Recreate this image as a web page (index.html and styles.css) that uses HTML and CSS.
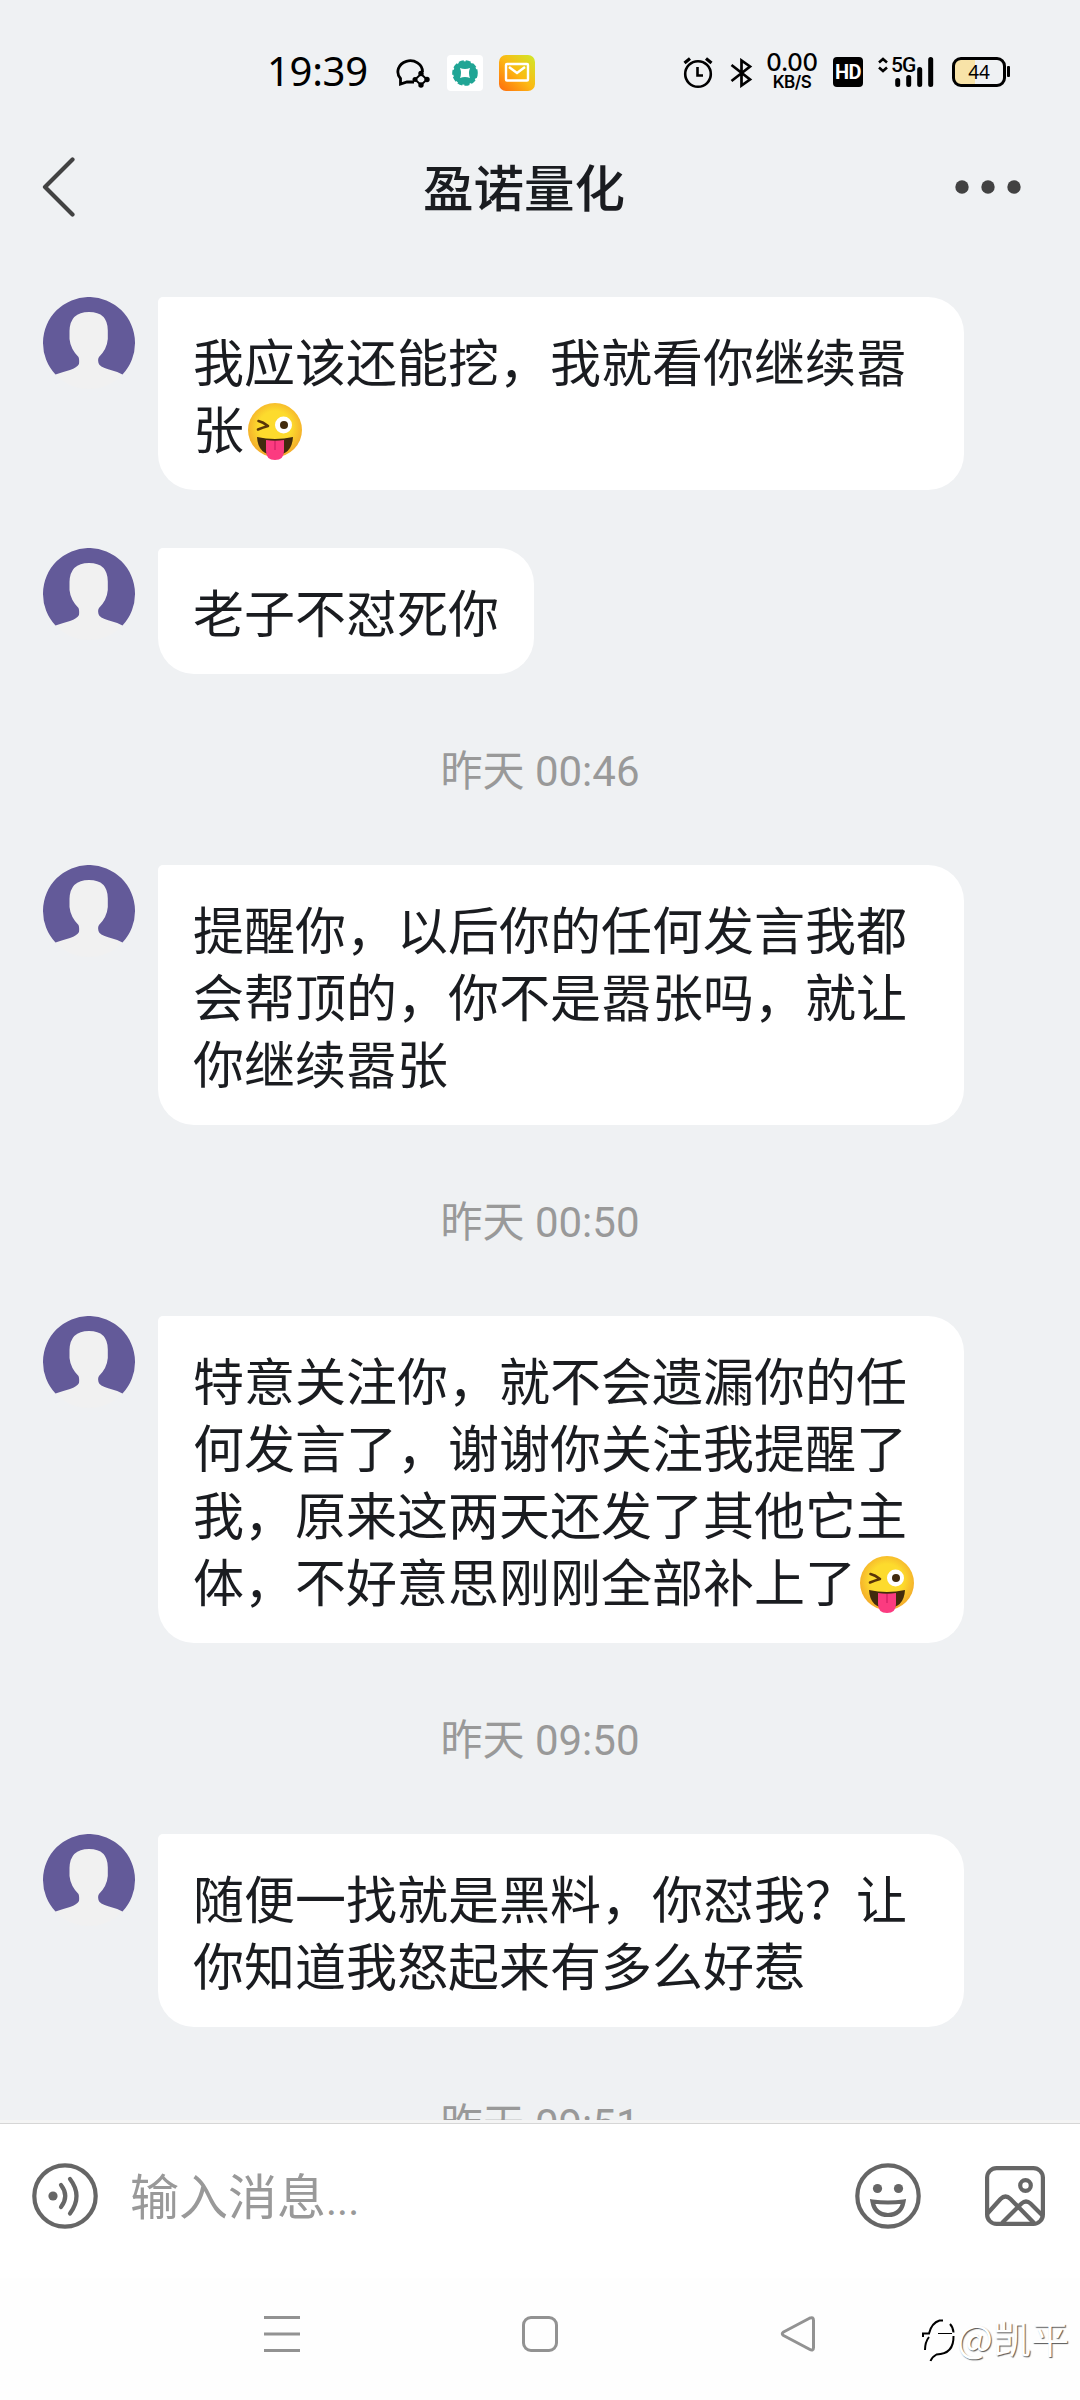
FILE: index.html
```html
<!DOCTYPE html>
<html lang="zh-CN">
<head>
<meta charset="utf-8">
<title>盈诺量化</title>
<link rel="stylesheet" href="styles.css">
</head>
<body>
<svg class="defs" aria-hidden="true">
  <symbol id="avatar" viewBox="0 0 92 92">
    <circle cx="46" cy="46" r="46" fill="#f1f1f1"/>
    <path fill="#635a99" d="M12.500 77.500A46 46 0 1 1 79.500 77.500Q74 74.500 66 72.500Q56 69.500 55.500 66Q54.500 62 56 60Q64 52 64.800 42V34Q65 15 46 15Q27 15 26.500 34V42Q27.500 52 35.500 60Q36.500 62 36 67Q34 70.500 27 73Q20 75 12.500 77.500Z"/>
  </symbol>
  <radialGradient id="face" cx=".5" cy=".45" r=".55">
    <stop offset=".55" stop-color="#fddb2d"/><stop offset="1" stop-color="#f3aa2b"/>
  </radialGradient>
  <symbol id="wink" viewBox="0 0 54 58">
    <circle cx="27" cy="27" r="27" fill="url(#face)"/>
    <circle cx="35.500" cy="22" r="8.500" fill="#fff"/>
    <circle cx="36" cy="22" r="4" fill="#422b0d"/>
    <path d="M10.500 18Q15 19 20 23Q15 24.500 10 26.500" fill="none" stroke="#5a3508" stroke-width="2.600" stroke-linecap="round" stroke-linejoin="round"/>
    <path d="M9 34Q27 38 45 34Q44 52 27 52Q10 52 9 34Z" fill="#422b0d"/>
    <path d="M18 37Q27 38.500 36 37V48Q36 57 27 57Q18 57 18 48Z" fill="#fb3b80"/>
    <path d="M27 38V47" stroke="#d9256a" stroke-width="1.500"/>
  </symbol>
</svg>

<header class="status">
  <span class="clock">19:39</span>
  <svg class="i-chat" width="35" height="30" viewBox="0 0 35 30" fill="none" stroke="#000" stroke-width="2.800">
    <path d="M19 24H12L5.500 26V20.500A12.300 11 0 1 1 27.500 14"/>
    <path d="M26 16L32 21.500L26 27L20 21.500Z" stroke-width="2"/>
    <g fill="#000" stroke="none"><circle cx="26" cy="15.500" r="2.700"/><circle cx="32" cy="21.500" r="2.700"/><circle cx="26" cy="27" r="2.700"/><circle cx="20" cy="21.500" r="2.500"/></g>
  </svg>
  <svg class="i-teal" width="36" height="36" viewBox="0 0 36 36">
    <rect width="36" height="36" rx="4" fill="#fff"/>
    <circle cx="18" cy="18" r="11.800" fill="#20a595"/>
    <circle cx="18" cy="18" r="11.800" fill="none" stroke="#20a595" stroke-width="2" stroke-dasharray="5 2"/>
    <path d="M13 13Q18 15 23 13Q21 18 23 23Q18 21 13 23Q15 18 13 13Z" fill="#fff"/>
  </svg>
  <svg class="i-mail" width="36" height="36" viewBox="0 0 36 36">
    <linearGradient id="mg" x1="0" y1="1" x2="1" y2="0"><stop offset="0" stop-color="#ff6a0c"/><stop offset=".5" stop-color="#fcb913"/><stop offset="1" stop-color="#cfe92a"/></linearGradient>
    <rect width="36" height="36" rx="7" fill="url(#mg)"/>
    <rect x="7" y="9" width="22" height="16.500" rx="1" fill="none" stroke="#fff" stroke-width="2.400"/>
    <path d="M10 12L18 18L26 12" fill="none" stroke="#fff" stroke-width="2.400"/>
  </svg>
  <svg class="i-alarm" width="30" height="32" viewBox="0 0 30 32" fill="none" stroke="#000" stroke-width="2.600">
    <circle cx="15" cy="17" r="12.800"/><path d="M14.500 10V18.500H20"/><path d="M1.500 6L7 1.500M23 1.500L28.500 6" stroke-width="3.200"/>
  </svg>
  <svg class="i-bt" width="23" height="30" viewBox="0 0 23 30" fill="none" stroke="#000" stroke-width="2.700">
    <path d="M1.500 7L20 21.500L11.500 27.500V2.500L20 8.500L1.500 23"/>
  </svg>
  <span class="speed"><b>0.00</b><i>KB/S</i></span>
  <span class="hd">HD</span>
  <svg class="i-updown" width="10" height="16" viewBox="0 0 10 16" fill="none" stroke="#000" stroke-width="2.600"><path d="M1 5.500L5 2L9 5.500M1 10.500L5 14L9 10.500"/></svg>
  <span class="signal">
    <span class="gen">5G</span>
    <svg width="40" height="30" viewBox="0 0 40 30"><path d="M2.700 23.500V27.500M13.700 20.500V27.500M24.700 12.500V27.500M35.700 2.500V27.500" stroke="#000" stroke-width="5" stroke-linecap="round"/></svg>
  </span>
  <span class="battery"><span class="level">44</span></span><span class="nub"></span>
</header>

<div class="titlebar">
  <svg width="36" height="60" viewBox="0 0 36 60"><path d="M31.500 2.500L4 30L31.500 57.500" fill="none" stroke="#424242" stroke-width="4.200" stroke-linecap="round" stroke-linejoin="round"/></svg>
  <h1>盈诺量化</h1>
  <svg class="more" width="66" height="14" viewBox="0 0 66 14" fill="#424242"><circle cx="7" cy="7" r="6.700"/><circle cx="33" cy="7" r="6.700"/><circle cx="59" cy="7" r="6.700"/></svg>
</div>

<main class="chat">
  <div class="msg"><svg class="avatar"><use href="#avatar"/></svg><p class="bubble two">我应该还能挖，我就看你继续嚣<br>张<svg class="emoji"><use href="#wink"/></svg></p></div>
  <div class="msg next"><svg class="avatar"><use href="#avatar"/></svg><p class="bubble short">老子不怼死你</p></div>
  <time>昨天 00:46</time>
  <div class="msg"><svg class="avatar"><use href="#avatar"/></svg><p class="bubble">提醒你，以后你的任何发言我都<br>会帮顶的，你不是嚣张吗，就让<br>你继续嚣张</p></div>
  <time>昨天 00:50</time>
  <div class="msg"><svg class="avatar"><use href="#avatar"/></svg><p class="bubble four">特意关注你，就不会遗漏你的任<br>何发言了，谢谢你关注我提醒了<br>我，原来这两天还发了其他它主<br>体，不好意思刚刚全部补上了<svg class="emoji"><use href="#wink"/></svg></p></div>
  <time>昨天 09:50</time>
  <div class="msg"><svg class="avatar"><use href="#avatar"/></svg><p class="bubble">随便一找就是黑料，你怼我？让<br>你知道我怒起来有多么好惹</p></div>
  <time>昨天 09:51</time>
</main>

<footer class="composer">
  <svg width="66" height="66" viewBox="0 0 66 66" fill="none" stroke="#666" stroke-width="4.200" stroke-linecap="round">
    <circle cx="33" cy="33" r="30.700"/><circle cx="21" cy="33" r="4.600" fill="#666" stroke="none"/>
    <path d="M29 22Q37.500 33 29 44M38 16Q51 33 38 50.500"/>
  </svg>
  <span class="placeholder">输入消息<span class="dots">...</span></span>
  <svg width="66" height="66" viewBox="0 0 66 66" fill="none" stroke="#666" stroke-width="4.200">
    <circle cx="33" cy="33" r="30.700"/><g fill="#666" stroke="none"><circle cx="22.500" cy="25.500" r="4.600"/><circle cx="43.500" cy="25.500" r="4.600"/></g>
    <path d="M17.500 38.500Q33 40.500 48.500 38.500Q46 52 33 52Q20 52 17.500 38.500Z"/>
  </svg>
  <svg class="photo" width="60" height="60" viewBox="0 0 60 60" fill="none" stroke="#666" stroke-width="4.200">
    <rect x="2.100" y="2.100" width="55.800" height="55.800" rx="9.500"/><circle cx="40.500" cy="19.500" r="5.300"/>
    <path d="M2 48L15.500 33Q20.500 28 25.500 33L49 57M17 57L36.500 37.500Q41 33.500 45.500 37.500L58 50"/>
  </svg>
</footer>

<nav class="keys">
  <svg width="36" height="36" viewBox="0 0 36 36" stroke="#929292" stroke-width="3"><path d="M0 1.500H36M0 18H36M0 34.500H36"/></svg>
  <svg width="36" height="36" viewBox="0 0 36 36" fill="none" stroke="#929292" stroke-width="3"><rect x="1.500" y="1.500" width="33" height="33" rx="7.500"/></svg>
  <svg width="36" height="36" viewBox="0 0 36 36" fill="none" stroke="#929292" stroke-width="3" stroke-linejoin="round"><path d="M29.500 2.200Q33.500 .5 33.500 4.500V31.500Q33.500 35.500 29.500 33.300L3.500 19.500Q1 17.700 3.500 16Z"/></svg>
  <span class="mark">
    <svg width="36" height="48" viewBox="0 0 36 48" fill="none" stroke="#000" stroke-width="2"><path d="M2 21V17.500H8Q10.500 7 18.500 4.500H22M29 8Q32 11 32.500 16.500M8 21Q4 26 4 34M32.500 20Q33 38 15.500 38.500Q11 41 9.500 45"/><path d="M17 17.500H31" stroke-width="1"/></svg>@凯平</span>
</nav>
</body>
</html>
```
FILE: styles.css
```css
* { box-sizing: border-box; }
body {
  margin: 0; width: 1080px; height: 2400px; overflow: hidden;
  display: flex; flex-direction: column;
  background: #eff1f3; color: #1a1c20;
  font-family: Roboto, "Noto Sans CJK SC", sans-serif;
}
svg { display: block; flex: none; }
.defs { width: 0; height: 0; position: absolute; }

.status { height: 145px; display: flex; align-items: center; color: #000; flex: none; padding-left: 267px; }
.clock { width: 128px; margin-top: -3px; font: 400 40px/60px "Noto Sans", sans-serif; letter-spacing: -.3px; white-space: nowrap; }
.i-chat { margin-right: 17px; }
.i-teal { margin-right: 16px; }
.i-mail { margin-right: 148px; }
.i-alarm { margin-right: 17px; }
.i-bt { margin-right: 12px; }
.speed { width: 54px; margin-top: -1px; display: flex; flex-direction: column; align-items: center; margin-right: 14px; }
.speed b { font: 500 24px/20px Inter, sans-serif; letter-spacing: -.3px; }
.speed i { font: 600 17px/18px Inter, sans-serif; letter-spacing: -.5px; }
.hd { width: 30px; height: 30px; border-radius: 4px; background: #000; color: #fff; font: 700 20px/31px Roboto, sans-serif; text-align: center; letter-spacing: -.5px; margin: -2px 15px 0 0; }
.i-updown { align-self: flex-start; margin: 57px 3px 0 0; }
.signal { width: 43px; height: 30px; display: grid; margin: -1px 18px 0 0; }
.signal > * { grid-area: 1 / 1; }
.signal svg { margin-left: 4px; }
.gen { font: 500 21px/16px Roboto, sans-serif; letter-spacing: -1px; }
.battery { width: 54px; height: 30px; border: 3px solid #000; border-radius: 9px; background: linear-gradient(90deg, #f8e3a8 20px, transparent 20px); text-align: center; margin-top: -2px; }
.level { display: block; font: 400 19px/25px "Noto Sans", sans-serif; }
.nub { width: 3px; height: 11px; background: #000; margin: -2px 0 0 1px; border-radius: 1px; }

.titlebar { height: 84px; display: flex; align-items: center; padding-left: 41px; flex: none; }
.titlebar h1 { margin: -4px 0 0 346px; width: 204px; font: 500 50.500px/70px "Noto Sans CJK SC", sans-serif; white-space: nowrap; }
.more { margin-left: 328px; }

.chat { height: 1894px; flex: none; overflow: hidden; padding-top: 68px; border-bottom: 3px solid #f4f4f4; }
.msg { display: flex; align-items: flex-start; padding-left: 43px; }
.next { margin-top: 58px; }
.avatar { width: 92px; height: 92px; margin-right: 23px; }
.bubble {
  margin: 0; width: 806px; padding: 30px 0 29px 35px;
  background: #fff; border-radius: 5px 36px 36px 36px;
  font: 400 51px/67px "Noto Sans CJK SC", sans-serif; white-space: nowrap;
}
.short { width: 376px; }
.two { height: 193px; }
.four { height: 327px; }
.emoji { display: inline-block; width: 54px; height: 58px; margin: 0 0 0 4px; vertical-align: -12px; }
time { display: block; height: 191px; text-align: center; font-size: 42px; line-height: 195px; color: #999; }

.composer { height: 155px; flex: none; display: flex; align-items: center; background: #fff; border-top: 1px solid #d6d6d6; padding: 0 0 11px 32px; }
.composer .placeholder { width: 757px; padding: 4px 0 0 32px; font: 400 49px/70px "Noto Sans CJK SC", sans-serif; color: #999; }
.dots { font-family: Roboto, sans-serif; font-size: 42px; }
.photo { margin-left: 64px; }

.keys { flex: 1; display: flex; align-items: flex-start; background: #fefefe; padding: 38px 0 0 264px; }
.keys > svg { margin-right: 222px; }
.keys > svg:nth-of-type(3) { margin-right: 105px; }
.mark { display: flex; font: 400 38px/42px "Noto Sans CJK SC", sans-serif; color: #fff; text-shadow: 1px 1px 1px #555; white-space: nowrap; }
```
